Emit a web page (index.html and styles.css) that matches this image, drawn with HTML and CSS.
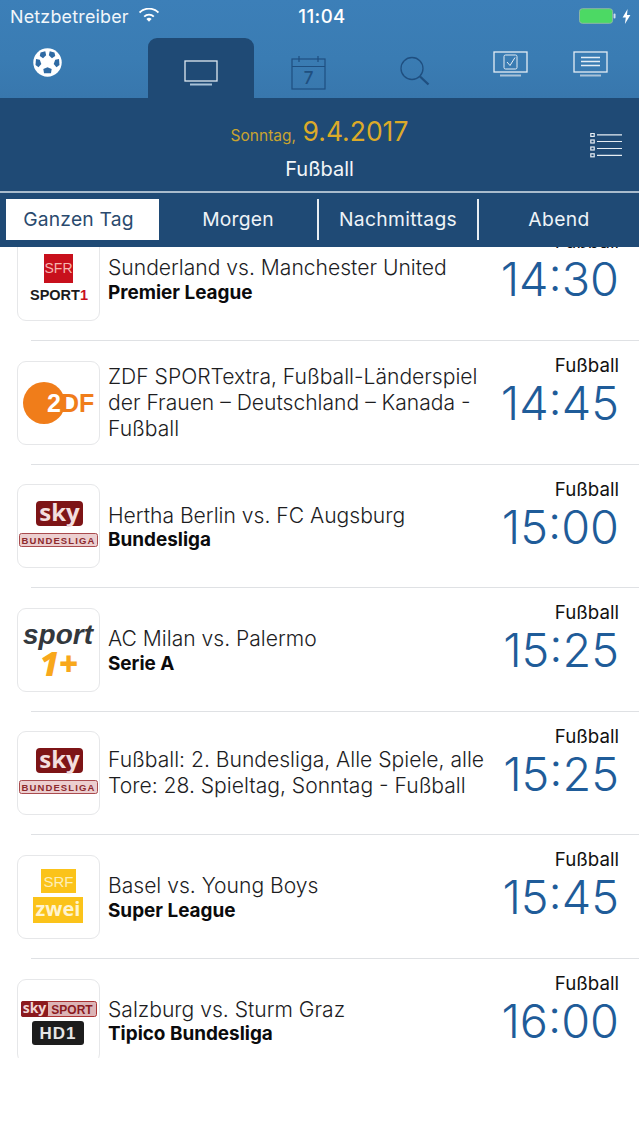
FILE: index.html
```html
<!DOCTYPE html>
<html lang="de">
<head>
<meta charset="utf-8">
<title>TV Programm</title>
<link rel="stylesheet" href="styles.css">
</head>
<body>
<header class="top">
  <div class="status">
    <div class="status-left">
      <span>Netzbetreiber</span>
      <svg class="wifi" viewBox="0 0 20 15"><path d="M10 13.800 7.400 11a3.700 3.700 0 0 1 5.200 0Z" fill="#fff"/><path d="M5.200 8.600a6.800 6.800 0 0 1 9.600 0" fill="none" stroke="#fff" stroke-width="1.900"/><path d="M.6 4.500a13.400 13.400 0 0 1 18.800 0" fill="none" stroke="#fff" stroke-width="1.800"/></svg>
    </div>
    <span class="clock">11:04</span>
    <div class="status-right">
      <svg class="battery" viewBox="0 0 38 17"><rect x=".5" y=".5" width="34" height="15" rx="3" fill="#4cd964" stroke="#8fb7a5"/><rect x="35.500" y="5.500" width="2" height="5" rx="1" fill="#cfe0ee"/></svg>
      <svg class="bolt" viewBox="0 0 9 15"><path d="M5.600 0 .6 8.400h3.200L2.900 15l5.500-9H5z" fill="#fff"/></svg>
    </div>
  </div>
  <nav class="nav">
    <div class="nav-item ball">
      <svg width="29" height="29" viewBox="0 0 30 30"><circle cx="15" cy="15" r="14.700" fill="#fff"/><g fill="#2f6aa3"><path d="M7.800 4.600 12.700 3.300 13.600 7.400 10.400 10.500 7 8.400Z"/><path d="M22.200 4.600 17.300 3.300 16.400 7.400 19.600 10.500 23 8.400Z"/><path d="M3.100 11.500 7 12.100 8.600 16.600 5.700 20 2.600 17.500Z"/><path d="M26.900 11.500 23 12.100 21.400 16.600 24.300 20 27.400 17.500Z"/><path d="M15 19.800 19.300 21.800 18.600 26.200H11.400L10.700 21.800Z"/></g></svg>
    </div>
    <div class="nav-item tab">
      <svg width="34" height="26" viewBox="0 0 34 26" fill="none" stroke="#dfe8f0"><rect x="1" y="1" width="32" height="20" stroke-width="1.300"/><path d="M6 24.500h22" stroke-width="2" stroke="#a9c2d8"/></svg>
    </div>
    <div class="nav-item cal">
      <svg width="36" height="36" viewBox="0 0 36 36" fill="none" stroke="#1f4f80" stroke-width="1.200"><rect x="1" y="4" width="33" height="30"/><path d="M1 11.500h33M8 1v6M27 1v6"/><text x="17.500" y="29" class="cal-day">7</text></svg>
    </div>
    <div class="nav-item find">
      <svg width="32" height="32" viewBox="0 0 32 32" fill="none" stroke="#1f4f80"><circle cx="13" cy="12.500" r="11" stroke-width="1.300"/><path d="m21 20.500 8.500 8" stroke-width="2.400"/></svg>
    </div>
    <div class="nav-item high">
      <svg width="36" height="26" viewBox="0 0 36 26" fill="none" stroke="#e4edf5"><rect x="1" y="1" width="33" height="20" stroke-width="1.300"/><rect x="11" y="4" width="13" height="14" rx="1.500" stroke-width="1"/><path d="m14 11 3 3.500 5-8" stroke-width="1"/><path d="M7 24.500h21" stroke-width="2" stroke="#a9c2d8"/></svg>
    </div>
    <div class="nav-item high last">
      <svg width="36" height="26" viewBox="0 0 36 26" fill="none" stroke="#e4edf5"><rect x="1" y="1" width="33" height="20" stroke-width="1.300"/><path d="M8 6.500h19M8 10.500h19M8 14.500h19" stroke-width="1.400"/><path d="M7 24.500h21" stroke-width="2" stroke="#a9c2d8"/></svg>
    </div>
  </nav>
</header>

<section class="day">
  <div class="day-spacer"></div>
  <div class="day-center">
    <div class="date"><span class="weekday">Sonntag,</span> <span class="full-date">9.4.2017</span></div>
    <div class="sport">Fußball</div>
  </div>
  <svg class="list-icon" width="32" height="25" viewBox="0 0 32 25" fill="none"><g stroke="#e6edf3" stroke-width="1.200"><path d="M7 1.800h25M7 8.500h25M7 15.500h25M7 22.300h25"/><rect x=".8" y=".4" width="3.400" height="3" fill="#1f4a75"/><rect x=".8" y="7" width="3.400" height="3" fill="#1f4a75"/><rect x=".8" y="14" width="3.400" height="3" fill="#1f4a75"/><rect x=".8" y="20.800" width="3.400" height="3" fill="#1f4a75"/></g></svg>
</section>

<div class="segments">
  <div class="segment active">Ganzen Tag</div>
  <div class="segment">Morgen</div>
  <div class="segment divided">Nachmittags</div>
  <div class="segment divided">Abend</div>
</div>

<main class="list">
  <div class="list-inner">
    <article class="row">
      <div class="logo">
        <svg viewBox="0 0 82 82"><rect x="26" y="16" width="29" height="29" fill="#c8101c"/><text x="40.500" y="35" class="l-srf">SFR</text><text x="41" y="62" class="l-sport1">SPORT<tspan fill="#c8101c">1</tspan></text></svg>
      </div>
      <div class="info"><div class="title">Sunderland vs. Manchester United</div><div class="league">Premier League</div></div>
      <div class="when"><div class="kind">Fußball</div><div class="time">14:30</div></div>
    </article>
    <article class="row">
      <div class="logo">
        <svg viewBox="0 0 82 82"><circle cx="26" cy="41" r="21" fill="#f07d1a"/><text x="29" y="50" class="l-zdf"><tspan fill="#fff">2</tspan>DF</text></svg>
      </div>
      <div class="info"><div class="title">ZDF SPORTextra, Fußball-Länderspiel der Frauen – Deutschland – Kanada - Fußball</div></div>
      <div class="when"><div class="kind">Fußball</div><div class="time">14:45</div></div>
    </article>
    <article class="row">
      <div class="logo">
        <svg viewBox="0 0 82 82"><rect x="18" y="16" width="47" height="25" rx="4" fill="#7d1416"/><text x="41.500" y="36" class="l-sky">sky</text><rect x="1.500" y="48.500" width="78" height="13" rx="2" fill="#eccfd0" stroke="#a94b4e"/><text x="40.500" y="58.500" class="l-bl">BUNDESLIGA</text></svg>
      </div>
      <div class="info"><div class="title">Hertha Berlin vs. FC Augsburg</div><div class="league">Bundesliga</div></div>
      <div class="when"><div class="kind">Fußball</div><div class="time">15:00</div></div>
    </article>
    <article class="row">
      <div class="logo">
        <svg viewBox="0 0 82 82"><text x="40" y="35" class="l-sp">sport</text><text x="41" y="67" class="l-one">1+</text></svg>
      </div>
      <div class="info"><div class="title">AC Milan vs. Palermo</div><div class="league">Serie A</div></div>
      <div class="when"><div class="kind">Fußball</div><div class="time">15:25</div></div>
    </article>
    <article class="row">
      <div class="logo">
        <svg viewBox="0 0 82 82"><rect x="18" y="16" width="47" height="25" rx="4" fill="#7d1416"/><text x="41.500" y="36" class="l-sky">sky</text><rect x="1.500" y="48.500" width="78" height="13" rx="2" fill="#eccfd0" stroke="#a94b4e"/><text x="40.500" y="58.500" class="l-bl">BUNDESLIGA</text></svg>
      </div>
      <div class="info"><div class="title">Fußball: 2. Bundesliga, Alle Spiele, alle Tore: 28. Spieltag, Sonntag - Fußball</div></div>
      <div class="when"><div class="kind">Fußball</div><div class="time">15:25</div></div>
    </article>
    <article class="row">
      <div class="logo">
        <svg viewBox="0 0 82 82"><rect x="23" y="13" width="35" height="24" fill="#fbc31a"/><text x="40.500" y="31" class="l-srf2">SRF</text><rect x="15" y="41" width="50" height="26" fill="#fbc31a"/><text x="40" y="60" class="l-zwei">zwei</text></svg>
      </div>
      <div class="info"><div class="title">Basel vs. Young Boys</div><div class="league">Super League</div></div>
      <div class="when"><div class="kind">Fußball</div><div class="time">15:45</div></div>
    </article>
    <article class="row">
      <div class="logo">
        <svg viewBox="0 0 82 82"><rect x="3.500" y="21.500" width="75" height="15" rx="2" fill="#dcb4b6" stroke="#a33"/><rect x="3" y="21" width="27" height="16" rx="2" fill="#8b1a1e"/><text x="16.500" y="33" class="l-skys">sky</text><text x="54" y="33.500" class="l-sps">SPORT</text><rect x="14" y="41" width="52" height="24" rx="3" fill="#1d1d1d"/><text x="40" y="59" class="l-hd">HD1</text></svg>
      </div>
      <div class="info"><div class="title">Salzburg vs. Sturm Graz</div><div class="league">Tipico Bundesliga</div></div>
      <div class="when"><div class="kind">Fußball</div><div class="time">16:00</div></div>
    </article>
  </div>
</main>
</body>
</html>
```

FILE: styles.css
```css
* { box-sizing: border-box; }
html, body { margin: 0; padding: 0; }
body {
  width: 639px;
  height: 1136px;
  overflow: hidden;
  background: #fff;
  color: #1c1c1e;
  font-family: Inter, "Open Sans", "Liberation Sans", sans-serif;
}

.top { background: linear-gradient(180deg, #3c7fb8 0%, #3a7cb3 60%, #3877ad 100%); height: 98px; }
.status {
  height: 38px;
  padding: 0 8px 6px 10px;
  display: grid;
  grid-template-columns: 1fr auto 1fr;
  align-items: center;
  color: #fff;
}
.status-left { display: flex; align-items: center; gap: 10px; font-size: 17.900px; letter-spacing: .2px; color: #f1f6fa; }
.wifi { width: 20px; height: 15px; margin-top: -1px; }
.clock { font-weight: 500; font-size: 18.600px; letter-spacing: .4px; margin-left: 3px; }
.status-right { display: flex; justify-content: flex-end; align-items: center; gap: 6px; }
.battery { width: 37px; height: 17px; }
.bolt { width: 9px; height: 15px; }

.nav { display: flex; height: 60px; }
.nav-item { display: flex; justify-content: center; height: 100%; }
.ball { width: 95px; margin-right: 53px; align-items: flex-start; padding-top: 10px; }
.tab {
  width: 106px;
  background: #1f4a75;
  border-radius: 9px 9px 0 0;
  align-items: center;
  padding-top: 9px;
}
.cal { width: 110px; align-items: flex-start; padding-top: 17px; }
.find { width: 100px; align-items: flex-start; padding: 18px 0 0 2px; }
.high { width: 94px; align-items: flex-start; padding-top: 13px; }
.last { width: 66px; }
.cal-day { font: 500 17px Inter, sans-serif; fill: #1f4f80; stroke: none; text-anchor: middle; }

.day {
  height: 93px;
  background: #1f4a75;
  display: grid;
  grid-template-columns: 1fr auto 1fr;
  align-items: center;
  padding: 0 17px;
}
.day-center { text-align: center; padding-top: 9px; }
.date { color: #dcaa29; line-height: 33px; }
.weekday { font-size: 15.500px; color: #c9a42f; }
.full-date { font-size: 26.500px; margin-left: 2px; }
.sport { color: #f2f5f8; font-size: 20px; line-height: 30px; margin-top: 2px; }
.list-icon { justify-self: end; margin-top: 1px; }

.segments {
  height: 56px;
  background: #1f4a75;
  border-top: 2px solid #a9bccd;
  padding: 6px 0 7px 6px;
  display: grid;
  grid-template-columns: 153px 158px 160px 1fr;
  color: #eef3f7;
  font-size: 19.300px;
}
.segment { display: flex; align-items: center; justify-content: center; letter-spacing: .2px; padding-bottom: 2px; }
.segment.active { background: #fff; color: #2a4a6e; padding-right: 8px; }
.segment.divided { border-left: 2px solid #e8eef3; letter-spacing: .35px; }

.list { height: 811px; overflow: hidden; background: #fff; }
.list-inner { margin-top: -29.700px; }
.row {
  height: 123.600px;
  position: relative;
  display: flex;
  align-items: center;
  padding-left: 17px;
}
.row::after {
  content: "";
  position: absolute;
  left: 31px;
  right: 0;
  bottom: 0;
  height: 1px;
  background: #dfe1e4;
}
.logo {
  width: 83px;
  height: 84px;
  flex: none;
  border: 1px solid #e6e7e9;
  border-radius: 9px;
  background: #fff;
  overflow: hidden;
}
.logo svg { display: block; width: 82px; height: 82px; }
.info { width: 388px; flex: none; padding-left: 8px; }
.title { font-size: 21.080px; line-height: 26px; color: #1d1d1f; font-weight: 300; }
.league { font-size: 18.900px; line-height: 21px; font-weight: 700; color: #0b0b0c; margin-top: .5px; }
.when {
  flex: 1;
  display: flex;
  flex-direction: column;
  align-items: flex-end;
  padding-right: 20px;
  align-self: flex-start;
  padding-top: 14px;
}
.kind { font-size: 18.700px; line-height: 22px; color: #111; }
.time { font-size: 46.800px; line-height: 52px; font-weight: 300; color: #1f5c99; white-space: nowrap; }

.l-srf { font: 500 14px "Liberation Sans", sans-serif; fill: #f5b5b0; text-anchor: middle; }
.l-sport1 { font: 900 14.500px "Liberation Sans", sans-serif; fill: #1b1b1b; text-anchor: middle; }
.l-zdf { font: 700 25px "Liberation Sans", sans-serif; fill: #f07d1a; }
.l-sky { font: 700 24px "Open Sans", sans-serif; fill: #f3dede; text-anchor: middle; }
.l-bl { font: 700 9.500px "Liberation Sans", sans-serif; fill: #8c2a2d; text-anchor: middle; letter-spacing: 1.100px; }
.l-sp { font: italic 700 28px "Liberation Sans", sans-serif; fill: #33383d; text-anchor: middle; }
.l-one { font: italic 800 33px "Open Sans", sans-serif; fill: #f8a81c; text-anchor: middle; }
.l-srf2 { font: 500 15px "Liberation Sans", sans-serif; fill: #fdeeb7; text-anchor: middle; }
.l-zwei { font: 700 20px "Open Sans", sans-serif; fill: #fff4cf; text-anchor: middle; }
.l-skys { font: 700 14px "Open Sans", sans-serif; fill: #f1d5d5; text-anchor: middle; }
.l-sps { font: 700 12px "Liberation Sans", sans-serif; fill: #8b1a1e; text-anchor: middle; }
.l-hd { font: 700 17px "Liberation Sans", sans-serif; fill: #e6e6e6; text-anchor: middle; letter-spacing: 1px; }
```
